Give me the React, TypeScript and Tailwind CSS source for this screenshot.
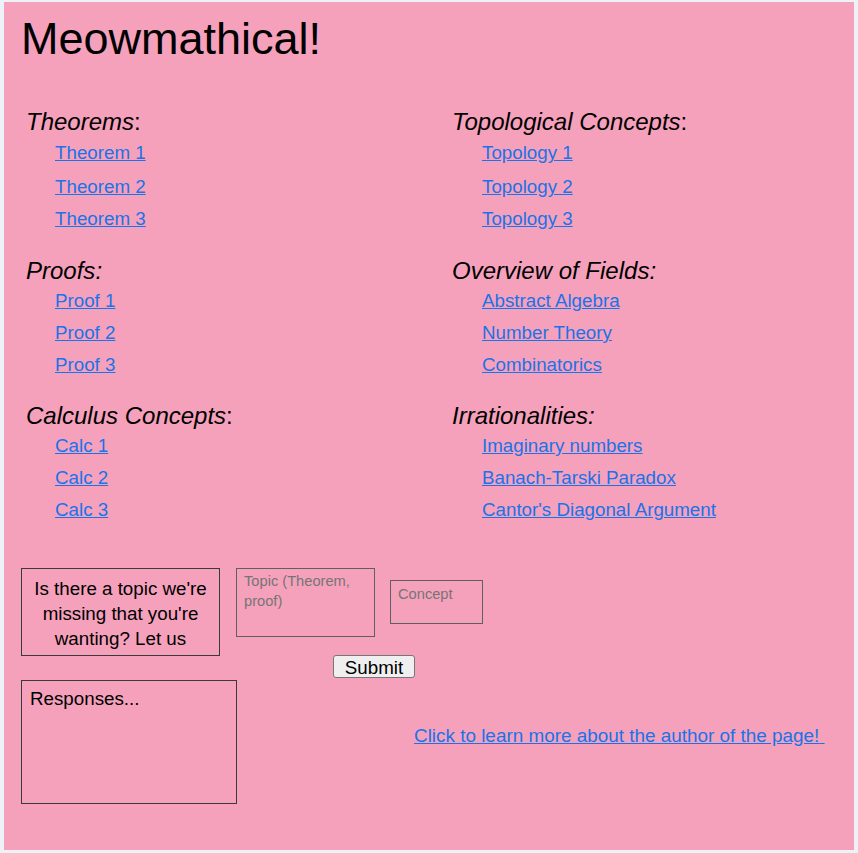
const sections = [
  {
    left: { title: "Theorems", colon: "normal", links: ["Theorem 1", "Theorem 2", "Theorem 3"] },
    right: { title: "Topological Concepts", colon: "normal", links: ["Topology 1", "Topology 2", "Topology 3"] },
    gap: "mb-[24px]",
    top: "mt-[3px]",
    first: "mb-[2px]",
  },
  {
    left: { title: "Proofs", colon: "italic", links: ["Proof 1", "Proof 2", "Proof 3"] },
    right: { title: "Overview of Fields", colon: "italic", links: ["Abstract Algebra", "Number Theory", "Combinatorics"] },
    gap: "mb-[23px]",
    top: "mt-[2px]",
    first: "",
  },
  {
    left: { title: "Calculus Concepts", colon: "normal", links: ["Calc 1", "Calc 2", "Calc 3"] },
    right: { title: "Irrationalities", colon: "italic", links: ["Imaginary numbers", "Banach-Tarski Paradox", "Cantor's Diagonal Argument"] },
    gap: "",
    top: "mt-[2px]",
    first: "",
  },
]

type Group = { title: string; colon: string; links: string[] }

function Section({ group, gap, top, first, indent }: { group: Group; gap: string; top: string; first: string; indent: string }) {
  return (
    <div className={gap}>
      <h2 className="text-[24px] leading-[24px] h-[24px] font-normal">
        <i>{group.title}</i>
        {group.colon === "italic" ? <i>:</i> : ":"}
      </h2>
      <ul className={top}>
        {group.links.map((l, i) => (
          <li key={l} className={`h-[32px] leading-[32px] ${indent} ${i === 0 ? first : ""}`}>
            <a href="#" className="text-[18.75px] text-[#1a73e8] underline">
              {l}
            </a>
          </li>
        ))}
      </ul>
    </div>
  )
}

export default function App() {
  return (
    <div className="min-h-screen bg-[#eef1f5] px-[4px] pt-[2px] pb-[3px] font-['Liberation_Sans',Arial,sans-serif] text-black">
      <main className="h-[848px] bg-[#f6a1bc] pl-[17px] pt-[14px]">
        <h1 className="text-[45px] leading-[45px] font-normal">Meowmathical!</h1>

        {/* topic lists */}
        <div className="mt-[49px] ml-[5px] grid grid-cols-[426px_1fr]">
          {sections.map((s) => (
            <div key={s.left.title} className="contents">
              <Section group={s.left} gap={s.gap} top={s.top} first={s.first} indent="pl-[29px]" />
              <Section group={s.right} gap={s.gap} top={s.top} first={s.first} indent="pl-[30px]" />
            </div>
          ))}
        </div>

        {/* suggestion form */}
        <div className="mt-[42px] flex items-start">
          <div className="w-[199px] h-[88px] overflow-hidden border border-[#3a3a3a] px-[8px] pt-[7px] text-center text-[18.75px] leading-[25px]">
            Is there a topic we're missing that you're wanting? Let us know!
          </div>
          <textarea
            placeholder="Topic (Theorem, proof)"
            className="ml-[16px] w-[139px] h-[69px] resize-none border border-[#5f5f5f] bg-transparent pl-[7px] pr-[4px] pt-[2px] text-[14.67px] leading-[20px] outline-none placeholder:text-[#757575]"
          />
          <textarea
            placeholder="Concept"
            className="ml-[15px] mt-[12px] w-[93px] h-[44px] resize-none border border-[#5f5f5f] bg-transparent pl-[7px] pt-[3px] text-[14.67px] leading-[20px] outline-none placeholder:text-[#757575]"
          />
        </div>
        <div className="-mt-[1px] flex h-[23px] pl-[312px]">
          <button className="w-[82px] h-[23px] rounded-[3px] border border-[#767676] bg-[#efefef] pt-[2px] text-[18.75px] leading-[19px] text-black">
            Submit
          </button>
        </div>
        <div className="mt-[2px] flex items-start">
          <div className="w-[216px] h-[124px] border border-[#3a3a3a] pl-[8px] pt-[7px] text-[18.75px] leading-[22px]">
            Responses...
          </div>
          <a href="#" className="ml-[177px] mt-[45px] text-[18.9px] leading-[22px] text-[#1a73e8] underline">
            Click to learn more about the author of the page!{"\u00a0"}
          </a>
        </div>
      </main>
    </div>
  )
}
